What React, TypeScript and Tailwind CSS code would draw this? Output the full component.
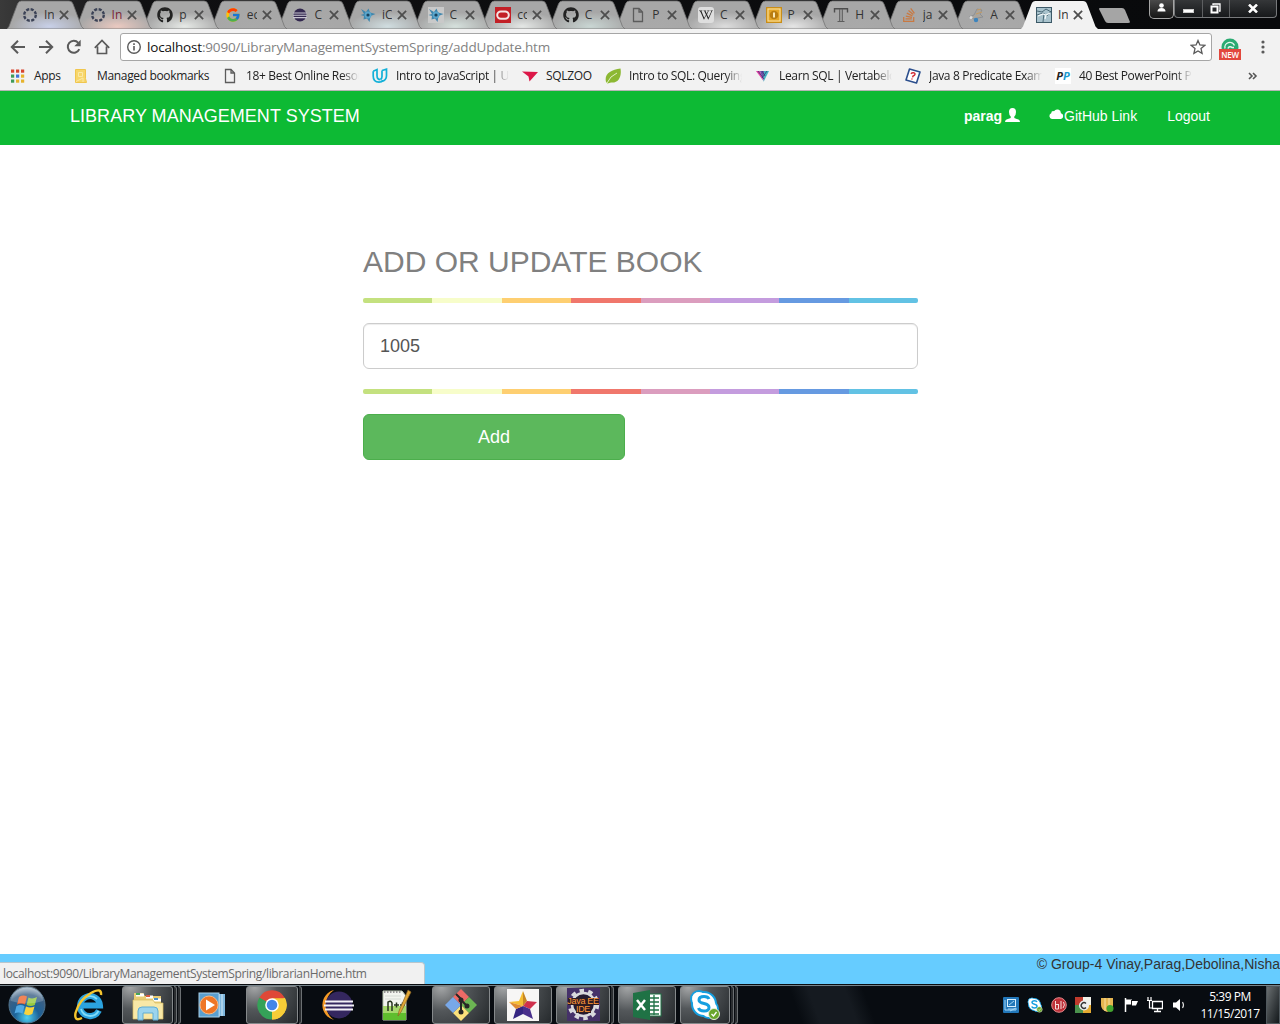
import React from "react";
import { FaGithub, FaWikipediaW, FaStackOverflow } from "react-icons/fa";
import { FcGoogle } from "react-icons/fc";

type IconProps = { size?: number; box?: string; children: React.ReactNode };

function Icon({ size = 16, box = "0 0 16 16", children }: IconProps) {
  return (
    <svg width={size} height={size} viewBox={box} className="block shrink-0" fill="none">
      {children}
    </svg>
  );
}

const DashedRing = () => (
  <Icon>
    <circle cx="8" cy="8" r="5.8" stroke="#3b4256" strokeWidth="2.4" strokeDasharray="3.1 1.45" />
  </Icon>
);

const EclipseIcon = () => (
  <Icon>
    <circle cx="8" cy="8" r="6.5" fill="#33284f" />
    <path d="M1 6h14M1 8.3h14M1 10.6h14" stroke="#c9c5d2" strokeWidth="1.1" />
  </Icon>
);

const Bird = ({ boxed = false }: { boxed?: boolean }) => (
  <Icon>
    {boxed && <rect width="16" height="16" fill="#c9c9c9" />}
    <path d="M1 2l5 3 2.500-3.500 1.500 4 5.500 1.500-5 2-1 6-2.500-3.500-3.500 1 .5-3.500L.5 8l3.500-1z" fill="#3e86ad" />
    <circle cx="8" cy="8" r="3.4" fill="#5aa5cb" />
    <circle cx="8" cy="8" r="1.6" fill="#17425f" />
  </Icon>
);

const OracleIcon = () => (
  <Icon>
    <rect width="16" height="16" fill="#c21f26" />
    <rect x="2.2" y="4.4" width="11.6" height="7.4" rx="3.7" stroke="#f4e4e4" strokeWidth="2" />
  </Icon>
);

const PageIcon = () => (
  <Icon>
    <path d="M3.5 1.5h5.5l3.5 3.5v9.500h-9zM9 1.500v3.500h3.500" stroke="#5c5c5c" strokeWidth="1.300" />
  </Icon>
);

const WikiIcon = () => (
  <span className="flex size-4 shrink-0 items-center justify-center rounded-[3px] bg-[#dedede]">
    <FaWikipediaW size={14} color="#222" />
  </span>
);

const GoldIcon = () => (
  <Icon>
    <rect x=".5" y=".5" width="15" height="15" fill="#e5a526" stroke="#c88d19" />
    <rect x="2" y="2" width="12" height="12" stroke="#f8e3a5" />
    <circle cx="8" cy="8" r="4.300" fill="#b97d12" />
    <path d="M8 5.500v5" stroke="#fbe9b8" strokeWidth="2" />
  </Icon>
);

const SerifT = () => (
  <Icon>
    <path d="M1.500 5.500V1.800h13v3.700" stroke="#4d4d4d" strokeWidth="1.400" />
    <path d="M6.700 2v12M9.300 2v12M4.500 14.500h7" stroke="#5d5d5d" strokeWidth="1.100" />
  </Icon>
);

const CloudSketch = () => (
  <Icon>
    <path d="M1 10l5-2 3-6 5 1-2 4 3 3-5 1-4 1z" fill="#a9a49d" stroke="#858a90" strokeWidth=".8" />
    <path d="M9 3l4-1M8 7l6-2" stroke="#c39a62" />
    <circle cx="8" cy="13" r="2.200" fill="#3d84bd" />
    <circle cx="3" cy="10.500" r="1.500" fill="#ddd" />
  </Icon>
);

const SpringTile = () => (
  <Icon>
    <rect x=".5" y=".5" width="15" height="15" fill="#a9c3cd" stroke="#3c5967" />
    <path d="M1 4l5 1 4-3 5 3M1 8l6-2 4 3 4-5M7 15l1-9" stroke="#40606e" strokeWidth=".9" />
    <path d="M2 9l5-2 3 1 4-2M9 12l1-4" stroke="#f4fafb" strokeWidth="1.200" />
  </Icon>
);

type TabItem = { icon: React.ReactNode; title: string; glow?: string; titleColor?: string };

const tabs: TabItem[] = [
  { icon: <DashedRing />, title: "In", glow: "#c8d0e8" },
  { icon: <DashedRing />, title: "In", glow: "#eac9c0", titleColor: "#7b2438" },
  { icon: <FaGithub size={16} color="#222" />, title: "p", glow: "#e6e9e6" },
  { icon: <FcGoogle size={16} />, title: "ec" },
  { icon: <EclipseIcon />, title: "C" },
  { icon: <Bird />, title: "iC", glow: "#d0dde0" },
  { icon: <Bird boxed />, title: "C", glow: "#d5e0dc" },
  { icon: <OracleIcon />, title: "co", glow: "#e4e7e5" },
  { icon: <FaGithub size={16} color="#222" />, title: "C", glow: "#c9d6d3" },
  { icon: <PageIcon />, title: "P" },
  { icon: <WikiIcon />, title: "C", glow: "#dcdcdc" },
  { icon: <GoldIcon />, title: "P", glow: "#e5e5e5" },
  { icon: <SerifT />, title: "H" },
  { icon: <FaStackOverflow size={16} color="#c87942" />, title: "ja" },
  { icon: <CloudSketch />, title: "A" },
  { icon: <SpringTile />, title: "In" },
];

function Tab({ tab, index }: { tab: TabItem; index: number }) {
  const active = index === tabs.length - 1;
  const id = `glow-${index}`;
  return (
    <div
      className="relative h-[29px] w-[67.6px] shrink-0"
      style={{ zIndex: active ? tabs.length + 1 : tabs.length - index }}
    >
      <svg width="81" height="29" viewBox="0 0 81 29" className="absolute top-0 left-0">
        <defs>
          <radialGradient id={id} cx=".55" cy=".9" r=".5">
            <stop offset="0" stopColor={tab.glow ?? "#a9a9a9"} />
            <stop offset="1" stopColor="#a7a7a7" />
          </radialGradient>
        </defs>
        <path
          d="M0 29L2 26.500 10.500 4Q11.500 1 14.500 1H62Q65 1 66 4L74.500 26.500 77 29Z"
          fill={active ? "#f2f2f2" : `url(#${id})`}
          stroke={active ? "none" : "#747474"}
          strokeWidth=".8"
        />
      </svg>
      <div className="relative flex h-[29px] items-center pt-px pl-[15px]">
        <span className="flex w-4 justify-center">{tab.icon}</span>
        <span
          className="ml-[6px] w-[10px] overflow-hidden text-[12px] leading-4 whitespace-nowrap"
          style={{ color: tab.titleColor ?? "#333" }}
        >
          {tab.title}
        </span>
        <svg width="10" height="10" viewBox="0 0 9 9" className="ml-[5px] shrink-0">
          <path d="M.8 .8l7.400 7.400M8.200 .8L.8 8.200" stroke="#4e4e4e" strokeWidth="1.600" />
        </svg>
      </div>
    </div>
  );
}

function TabStrip() {
  return (
    <div className="isolate flex h-[29px] overflow-hidden bg-gradient-to-r from-[#3a3a3a] via-[#101012] via-10% to-[#08090b] pl-[7px]">
      {tabs.map((tab, i) => (
        <Tab key={i} tab={tab} index={i} />
      ))}
      <svg width="36" height="29" viewBox="0 0 36 29" className="ml-[9px] shrink-0">
        <path d="M2 8H24Q26 8 27 10L32 22Q32 23 30 23H10Q8 23 7 21L1 9Q1 8 2 8Z" fill="#a5a5a5" />
      </svg>
      <div className="ml-[15px] h-[19px] w-[25px] shrink-0 rounded-b-[5px] border border-t-0 border-[#a5a5a5] bg-gradient-to-b from-[#4a4a4a] to-[#161616]">
        <svg width="23" height="18" viewBox="0 0 23 18">
          <circle cx="11.500" cy="5.500" r="2.300" fill="#fff" />
          <path d="M7.500 11.500q0-3.500 4-3.500t4 3.500z" fill="#fff" />
        </svg>
      </div>
      <div className="flex h-[18px] w-[103px] shrink-0 rounded-b-[4px] border border-t-0 border-[#77797b] bg-gradient-to-b from-[#353739] to-[#17191b]">
        <div className="flex w-[28px] items-center justify-center border-r border-[#5d5f61] pt-[4px]">
          <span className="h-[4px] w-[11px] border border-[#ccc] bg-white" />
        </div>
        <div className="flex w-[27px] items-center justify-center border-r border-[#5d5f61]">
          <svg width="11" height="11" viewBox="0 0 11 11" fill="none" stroke="#fff">
            <path d="M3 2V1h7v7H9" strokeWidth="1.300" />
            <rect x="1.500" y="3.500" width="6" height="6" strokeWidth="2" />
          </svg>
        </div>
        <div className="flex flex-1 items-center justify-center">
          <svg width="10" height="9" viewBox="0 0 10 9">
            <path d="M1 .5l8 8M9 .5l-8 8" stroke="#fff" strokeWidth="2.500" />
          </svg>
        </div>
      </div>
    </div>
  );
}

function Toolbar() {
  return (
    <div className="flex h-[36px] items-center bg-[#f2f2f2] pl-[10px]">
      <div className="flex gap-3">
        <Icon>
          <path d="M15 8H2M8 1.800L1.800 8 8 14.200" stroke="#5a5a5a" strokeWidth="2" />
        </Icon>
        <Icon>
          <path d="M1 8h13M8 1.800L14.200 8 8 14.200" stroke="#5a5a5a" strokeWidth="2" />
        </Icon>
        <Icon>
          <path d="M13.300 10.200A6 6 0 1 1 12.300 3.800" stroke="#5a5a5a" strokeWidth="2" />
          <path d="M14.700 .8v6.400H8.300z" fill="#5a5a5a" />
        </Icon>
        <Icon>
          <path d="M.8 8.800L8 1.500l7.200 7.300M3.500 7.500v7h9v-7" stroke="#5a5a5a" strokeWidth="1.700" />
        </Icon>
      </div>
      <div className="ml-[10px] flex h-[28px] w-[1092px] items-center rounded-[3px] border border-[#a6a6a6] bg-white pr-[5px] pl-[5px]">
        <Icon>
          <circle cx="8" cy="8" r="6.300" stroke="#5a5a5a" strokeWidth="1.400" />
          <path d="M8 7v4.500M8 4.300v1.600" stroke="#5a5a5a" strokeWidth="1.600" />
        </Icon>
        <span className="ml-[5px] flex-1 text-[13.5px] leading-5 tracking-[-0.18px] whitespace-nowrap text-[#828282]">
          <span className="text-[#111]">localhost</span>:9090/LibraryManagementSystemSpring/addUpdate.htm
        </span>
        <Icon>
          <path d="M8 1.500l1.900 4.500 4.800.4-3.700 3.200 1.100 4.800L8 11.900l-4.100 2.500L5 9.600 1.300 6.400l4.800-.4z" stroke="#5a5a5a" strokeWidth="1.300" />
        </Icon>
      </div>
      <div className="ml-[6px] flex h-[24px] w-[24px] flex-col items-center pt-[3px]">
        <svg width="18" height="11" viewBox="0 0 18 11" className="shrink-0">
          <circle cx="9" cy="9" r="8.500" fill="#2bab72" />
          <path d="M4 10.500a5 5 0 0 1 9.500-3M7 10.500a2.300 2.300 0 0 1 4-1h2" stroke="#e5f7ee" strokeWidth="1.400" fill="none" />
        </svg>
        <span className="flex h-[11px] w-[22px] shrink-0 items-center justify-center bg-[#e2483d] text-[8px] leading-none font-semibold tracking-[-0.2px] text-white">
          NEW
        </span>
      </div>
      <svg width="4" height="16" viewBox="0 0 4 16" className="ml-[19px]" fill="#5a5a5a">
        <circle cx="2" cy="3" r="1.600" />
        <circle cx="2" cy="8" r="1.600" />
        <circle cx="2" cy="13" r="1.600" />
      </svg>
    </div>
  );
}

const appColors = ["#d8452f", "#d8452f", "#d8452f", "#3f9b58", "#3f74d8", "#e6b32c", "#3f9b58", "#e6b32c", "#e6b32c"];

type Bookmark = { width: string; label: string; icon: React.ReactNode; fade?: boolean };

const bookmarks: Bookmark[] = [
  {
    width: "w-[63px]",
    label: "Apps",
    icon: (
      <Icon>
        {appColors.map((c, i) => (
          <rect key={i} x={1 + (i % 3) * 5} y={1.5 + Math.floor(i / 3) * 5} width="3.200" height="3.200" fill={c} />
        ))}
      </Icon>
    ),
  },
  {
    width: "w-[149px]",
    label: "Managed bookmarks",
    icon: (
      <Icon>
        <path d="M2.500 1.500h10v9l1 4h-11z" fill="#f7d66b" stroke="#f0c64e" />
        <path d="M5.500 4.500h4v4h-4zM3 13.500l7-3.500v4" stroke="#fbe9a6" />
      </Icon>
    ),
  },
  { width: "w-[150px]", label: "18+ Best Online Resources", icon: <PageIcon />, fade: true },
  {
    width: "w-[150px]",
    label: "Intro to JavaScript | Udacity",
    icon: (
      <Icon>
        <path d="M1.200 3.200L5 1.500v6q0 4 3.500 4.200M1.200 3.200V8q0 6 5.800 6.200 2.800 0 4-1.700" stroke="#12b0d8" strokeWidth="1.700" />
        <path d="M10 2.500l4.500-1.300v6.500q0 4.800-5 5.500M10 2.500v6q0 2-1.500 3" stroke="#12b0d8" strokeWidth="1.700" />
      </Icon>
    ),
    fade: true,
  },
  {
    width: "w-[83px]",
    label: "SQLZOO",
    icon: (
      <Icon>
        <path d="M0 3.500l16 .5-8.500 9.500-1-5z" fill="#dc1748" />
      </Icon>
    ),
  },
  {
    width: "w-[150px]",
    label: "Intro to SQL: Querying and",
    icon: (
      <Icon>
        <path d="M15.500 .5C17 9 13 15.500 6 14.500L2.500 15.500 1 14C-1 6 6 1.500 15.500 .5z" fill="#8cb833" />
        <path d="M2 15Q5 8 12 5" stroke="#e4f0c4" />
      </Icon>
    ),
    fade: true,
  },
  {
    width: "w-[150px]",
    label: "Learn SQL | Vertabelo",
    icon: (
      <Icon>
        <path d="M1 3h4l3.500 10z" fill="#df3fa3" />
        <path d="M5 3h4l-.5 10z" fill="#6b4fa8" />
        <path d="M9 3h5L8.500 14z" fill="#45b6c3" />
        <path d="M3 3l6 8M7 3l3 5M12 3L7 10" stroke="#343b77" strokeWidth=".8" />
      </Icon>
    ),
    fade: true,
  },
  {
    width: "w-[150px]",
    label: "Java 8 Predicate Example",
    icon: (
      <Icon>
        <path d="M4.500 1l10.500 3-3.500 11L1 12z" fill="#fff" stroke="#2c4f8d" strokeWidth="1.600" strokeLinejoin="round" />
        <path d="M6 5.800q1-1.500 3-1 1.800 1 .4 2.500-1.700.7-1.900 2M7 10.500l-.1 1" stroke="#d3323c" strokeWidth="1.500" />
      </Icon>
    ),
    fade: true,
  },
  {
    width: "w-[137px]",
    label: "40 Best PowerPoint Presentations",
    icon: (
      <span className="flex size-4 shrink-0 items-center justify-center bg-white text-[11px] leading-none font-bold text-[#222] italic">
        <span>P</span>
        <span className="text-[#1a9ad0]">P</span>
      </span>
    ),
    fade: true,
  },
];

function BookmarksBar() {
  return (
    <div className="flex h-[26px] items-center border-b border-[#b5b5b5] bg-[#f2f2f2] pb-[4px] pl-[10px]">
      {bookmarks.map((b) => (
        <div key={b.label} className={`flex shrink-0 items-center gap-2 ${b.width}`}>
          {b.icon}
          <span
            className={`text-[12px] leading-[18px] tracking-[-0.34px] whitespace-nowrap text-[#222] ${
              b.fade ? "w-[113px] overflow-hidden [mask-image:linear-gradient(to_right,black_85%,transparent)]" : ""
            }`}
          >
            {b.label}
          </span>
        </div>
      ))}
      <svg width="10" height="8" viewBox="0 0 10 8" fill="none" className="ml-[56px]">
        <path d="M1 1l3 3-3 3M5 1l3 3-3 3" stroke="#555" strokeWidth="1.600" />
      </svg>
    </div>
  );
}

function SiteNav() {
  return (
    <nav className="flex h-[54px] items-start justify-between bg-[#0dba34] px-[70px] text-white">
      <span className="pt-[15px] text-[18px] leading-5 tracking-[0.03px]">LIBRARY MANAGEMENT SYSTEM</span>
      <div className="flex gap-[30px] pt-[15px] text-[14px] leading-5">
        <span className="flex gap-[3px] font-bold">
          parag
          <svg width="15" height="15" viewBox="0 0 15 15" className="mt-[2px]">
            <path d="M7.500 0Q11 0 11 4 11 7 9.300 8.500V10l4.200 1.600Q15 12.200 15 14H0Q0 12.200 1.500 11.600L5.700 10V8.500Q4 7 4 4 4 0 7.500 0z" fill="#fff" />
          </svg>
        </span>
        <span className="-ml-px flex">
          <svg width="15" height="11" viewBox="0 0 15 11" className="mt-[3px]">
            <path d="M3 10a3 3 0 0 1-.8-5.700A2.300 2.300 0 0 1 5 2.200 3.800 3.800 0 0 1 12 4.200 3 3 0 0 1 12 10z" fill="#fff" />
          </svg>
          GitHub Link
        </span>
        <span>Logout</span>
      </div>
    </nav>
  );
}

function ColorRule() {
  return (
    <div className="flex h-[5px] overflow-hidden rounded-[2px]">
      <span className="flex-1 bg-[#c4e17f]" />
      <span className="flex-1 bg-[#f7fdca]" />
      <span className="flex-1 bg-[#fecf71]" />
      <span className="flex-1 bg-[#f0776c]" />
      <span className="flex-1 bg-[#db9dbe]" />
      <span className="flex-1 bg-[#c49cde]" />
      <span className="flex-1 bg-[#669ae1]" />
      <span className="flex-1 bg-[#62c2e4]" />
    </div>
  );
}

function BookForm() {
  return (
    <main className="min-h-0 flex-1 bg-white pt-[100px] pl-[363px]">
      <div className="w-[555px]">
        <h2 className="text-[30px] leading-[33px] text-[#808080]">ADD OR UPDATE BOOK</h2>
        <div className="pt-[20px]">
          <ColorRule />
        </div>
        <input
          defaultValue="1005"
          className="my-[20px] block h-[46px] w-full rounded-[6px] border border-[#ccc] px-4 text-[18px] text-[#555] shadow-[inset_0_1px_1px_rgba(0,0,0,0.075)] outline-none"
        />
        <ColorRule />
        <button className="mt-[20px] block h-[46px] w-[262px] rounded-[6px] border border-[#4cae4c] bg-[#5cb85c] text-[18px] text-white">
          Add
        </button>
      </div>
    </main>
  );
}

function SiteFooter() {
  return (
    <footer className="flex h-[30px] items-start justify-between bg-[#66ccff]">
      <div className="mt-[8px] h-[22px] w-[425px] rounded-tr-[4px] border-t border-r border-[#b9c6cd] bg-[#f1f1f1] pt-[2px] pl-[3px] font-['Open_Sans',sans-serif] text-[12px] leading-[18px] tracking-[-0.36px] whitespace-nowrap text-[#6a6a6a]">
        localhost:9090/LibraryManagementSystemSpring/librarianHome.htm
      </div>
      <span className="text-[14px] leading-5 whitespace-nowrap text-[#333]">© Group-4 Vinay,Parag,Debolina,Nisha</span>
    </footer>
  );
}

function TaskButton({ width, stack = 0, children }: { width: string; stack?: number; children: React.ReactNode }) {
  return (
    <div className="flex h-[38px] shrink-0">
      <div
        className={`flex items-center justify-center rounded-[3px] border border-[#85898b] bg-[radial-gradient(circle_at_15%_0%,#a5a7a8,#53575a_40%,#25292c)] ${width}`}
      >
        {children}
      </div>
      {Array.from({ length: stack }, (_, i) => (
        <div key={i} className="ml-px w-[3px] rounded-r-[3px] border-y border-r border-[#6b6f72] bg-[#2a2d30]" />
      ))}
    </div>
  );
}

const StartOrb = () => (
  <svg width="38" height="38" viewBox="0 0 38 38" className="shrink-0">
    <defs>
      <radialGradient id="orb" cx=".5" cy=".85" r=".85">
        <stop offset="0" stopColor="#4fd0f0" />
        <stop offset=".4" stopColor="#1c6299" />
        <stop offset=".75" stopColor="#3b5f83" />
        <stop offset="1" stopColor="#b5c5d2" />
      </radialGradient>
    </defs>
    <circle cx="19" cy="19" r="18" fill="url(#orb)" stroke="#51758e" />
    <path d="M11 11q4-2.500 8-.5l-2 8q-4-2-8 0z" fill="#ee672d" />
    <path d="M20.500 11.500q4 2 8.500-.5l-2.200 8q-4 2-8.300 0z" fill="#97c93e" />
    <path d="M8.500 20q4-2 8 0l-2 7.500q-4-2-8 0z" fill="#50a9e4" />
    <path d="M18 20.500q4 2 8.500 0l-2.200 7.500q-4 2.300-8.300 0z" fill="#fbd33c" />
    <path d="M3 15A16 16 0 0 1 35 15Q19 20 3 15z" fill="#fff" opacity=".2" />
  </svg>
);

const ExplorerE = () => (
  <Icon size={34} box="0 0 34 34">
    <path d="M26 22.500A10 10 0 1 1 27 17.500H10" stroke="#2ba3df" strokeWidth="6" />
    <path d="M25.500 23A9.500 9.500 0 0 1 8 21M8 14A10 10 0 0 1 24 11" stroke="#82dcf8" strokeWidth="1.800" />
    <path d="M9 30Q1 34 2.500 25 6 12 18 5 29-1 28 7" stroke="#f5c52e" strokeWidth="2.400" />
  </Icon>
);

const FolderIcon = () => (
  <Icon size={34} box="0 0 34 34">
    <path d="M3 5h9l2 3h16v22H3z" fill="#e9cc72" />
    <path d="M5 7h8M15 9h7M22 12h8" stroke="#fff" strokeWidth="3" />
    <path d="M5 6h4" stroke="#44a55a" strokeWidth="2" />
    <path d="M15 8h4" stroke="#d75a43" strokeWidth="2" />
    <path d="M23 11h4" stroke="#4a90c9" strokeWidth="2" />
    <path d="M2 12h20l2 3h8v16H2z" fill="#f8e8a7" stroke="#d9bc62" strokeWidth=".7" />
    <path d="M7 32V23q0-4 4-4h12q4 0 4 4v9h-5v-7H12v7z" fill="#9bd4ee" stroke="#5facd3" />
  </Icon>
);

const MediaPlayer = () => (
  <Icon size={28} box="0 0 28 28">
    <path d="M6 3h21v22H6z" fill="#7eb6dc" />
    <path d="M24 3v22M21 3v23" stroke="#d5ebf7" />
    <rect x="1" y="2" width="20" height="24" fill="#5a9fcf" stroke="#a7d0e9" />
    <circle cx="11" cy="14" r="9" fill="#ef7625" stroke="#fab780" />
    <path d="M8 8.500v11l9-5.500z" fill="#fff" />
  </Icon>
);

const ChromeIcon = () => (
  <Icon size={30} box="0 0 30 30">
    <path d="M15 15L2.300 7.700A14.600 14.600 0 0 1 27.700 7.700z" fill="#df4837" />
    <path d="M15 15L27.700 7.700A14.600 14.600 0 0 1 15 29.600z" fill="#f7cd37" />
    <path d="M15 15v14.600A14.600 14.600 0 0 1 2.300 7.700z" fill="#35a258" />
    <path d="M15 8.300h13A14.600 14.600 0 0 1 15 29.600l5.800-11.200z" fill="#f7cd37" />
    <path d="M2.300 7.700L9.200 18.400 15 22v-7z" fill="#35a258" />
    <circle cx="15" cy="15" r="6.800" fill="#fff" />
    <circle cx="15" cy="15" r="5.300" fill="#4386e8" />
  </Icon>
);

const EclipseLarge = () => (
  <Icon size={34} box="0 0 34 34">
    <path d="M14 2A15.500 15.500 0 0 0 14 32 18 18 0 0 1 14 2z" fill="#f49a26" />
    <circle cx="19" cy="17" r="13.500" fill="#34275f" />
    <path d="M5 13.500h28M4 17.500h30M5 21.500h28" stroke="#f3f1f7" strokeWidth="1.900" />
  </Icon>
);

const NotepadIcon = () => (
  <Icon size={34} box="0 0 34 34">
    <path d="M3 3h19l4 5v24H3z" fill="#f2f5ef" stroke="#b8c6b0" />
    <path d="M3 18h23v14H3z" fill="#a6d96c" />
    <path d="M3 25h23v7H3z" fill="#5fbe2e" />
    <path d="M4 4h17" stroke="#999" strokeWidth="2" strokeDasharray="1.500 1.500" />
    <path d="M5 8h16M5 11h16" stroke="#d5dcd5" />
    <path d="M8 23v-9q3-2 4 1v8M14 17h5M16.500 14.500v5M20 17h5M22.500 14.500v5" stroke="#27351f" strokeWidth="1.500" />
    <path d="M31 4l-10 20-3 4 1-5L28 2z" fill="#e1a736" stroke="#8a6425" strokeWidth=".7" />
  </Icon>
);

const GitIcon = () => (
  <Icon size={34} box="0 0 34 34">
    <path d="M17 1l8 8-8 8-8-8z" fill="#ed6a66" />
    <path d="M25 9l8 8-8 8-8-8z" fill="#6cb553" />
    <path d="M17 17l8 8-8 8-8-8z" fill="#fbe17b" />
    <path d="M9 9l8 8-8 8-8-8z" fill="#78a8e8" />
    <path d="M12 6l5 5v13M17 12l6 6" stroke="#272727" strokeWidth="2" />
    <circle cx="17" cy="12" r="2.500" fill="#272727" />
    <circle cx="17" cy="24" r="2.500" fill="#272727" />
    <circle cx="23" cy="18" r="2.500" fill="#272727" />
  </Icon>
);

const StarIcon = () => (
  <Icon size={32} box="0 0 32 32">
    <rect width="32" height="32" fill="#f7f6f5" />
    <path d="M16 17V2l4 10z" fill="#c78725" />
    <path d="M16 17V2l-4 10L2 13z" fill="#f5be34" />
    <path d="M16 17l4-5 10 1-7 7z" fill="#cf314c" />
    <path d="M16 17l7 3 3 10-10-5z" fill="#49308c" />
    <path d="M16 17v8L6 30l3-10z" fill="#352681" />
    <path d="M16 17L2 13l7 7z" fill="#de8b33" />
  </Icon>
);

const JavaEE = () => (
  <span className="relative flex size-[33px] items-center justify-center bg-[#453169]">
    <svg width="33" height="33" viewBox="0 0 33 33" className="absolute inset-0" fill="none">
      <circle cx="16.500" cy="16.500" r="14" stroke="#d9d9dd" strokeWidth="3.500" strokeDasharray="4.500 4.300" />
      <circle cx="16.500" cy="16.500" r="11.500" stroke="#d9d9dd" strokeWidth="2.500" fill="#241b33" />
      <path d="M1 10h31v7H1zM9 17h15v8H9z" fill="#2d1c22" />
    </svg>
    <span className="relative flex flex-col items-center font-['Liberation_Sans',sans-serif] text-[9px] leading-[8px] tracking-[-0.3px] whitespace-nowrap text-[#ff9838]">
      <span>Java EE</span>
      <span>IDE</span>
    </span>
  </span>
);

const ExcelIcon = () => (
  <Icon size={32} box="0 0 32 32">
    <rect x="15" y="5" width="15" height="22" fill="#fff" stroke="#1f7245" />
    <path d="M18 9h10M18 13h10M18 17h10M18 21h10M18 25h10M23 6v20" stroke="#1f7245" strokeWidth="1.300" />
    <path d="M2 4l17-3v30L2 28z" fill="#1f7245" />
    <path d="M6 11l8 10M14 11L6 21" stroke="#fff" strokeWidth="2.500" />
  </Icon>
);

const SkypeShape = () => (
  <>
    <circle cx="10" cy="10" r="8" fill="#fff" stroke="#159fe0" strokeWidth="2" />
    <circle cx="20" cy="20" r="9" fill="#fff" stroke="#159fe0" strokeWidth="2" />
    <circle cx="15" cy="15" r="12" fill="#fff" stroke="#159fe0" strokeWidth="2" />
    <circle cx="10" cy="10" r="7" fill="#fff" />
    <circle cx="20" cy="20" r="8" fill="#fff" />
    <path d="M20 10q-1-2.500-5-2.500-5 0-5 3.500 0 2.500 5 3.500 5 1 5 4 0 3.500-5 3.500-4.500 0-5.500-3" stroke="#159fe0" strokeWidth="3" />
    <circle cx="25" cy="25" r="5.500" fill="#69a52c" stroke="#e7f0da" />
    <path d="M22.500 25l2 2 3-4" stroke="#fff" strokeWidth="1.300" />
  </>
);

function SystemTray() {
  return (
    <div className="ml-auto flex items-center">
      <div className="flex gap-2">
        <Icon>
          <rect width="16" height="16" rx="1" fill="#2277b9" />
          <rect x="4.500" y="2.500" width="8" height="7" stroke="#d8f0ff" />
          <path d="M2 3v10h11M5 12h9M6 8l5-4M7 14l6-3" stroke="#a0d5f6" />
        </Icon>
        <Icon box="0 0 32 32">
          <SkypeShape />
        </Icon>
        <Icon>
          <circle cx="8" cy="8" r="7.300" fill="#bd3038" stroke="#e8888c" />
          <path d="M4.500 4v8M7.500 7v5h-3M4.500 7.500h3M10 4v8M12.500 5q2 3-.5 6" stroke="#f5dada" strokeWidth="1" />
        </Icon>
        <Icon>
          <path d="M0 0h9v8H0z" fill="#bf3b2d" />
          <path d="M8 0h8v9H8z" fill="#f1f1e9" />
          <path d="M0 8h8v8H0z" fill="#4a924d" />
          <path d="M8 8h8v8H8z" fill="#e5aa31" />
          <circle cx="9" cy="8.500" r="5" fill="#ededed" />
          <path d="M11 6.500a2.800 2.800 0 1 0 0 4" stroke="#333" strokeWidth="1.300" />
        </Icon>
        <Icon>
          <path d="M2 1h12v7q0 5-6 7-6-2-6-7z" fill="#e6b650" />
          <path d="M6 1v13M10 1v13" stroke="#f9dfa0" />
          <circle cx="11" cy="11.500" r="3.500" fill="#44a52f" />
        </Icon>
        <Icon>
          <path d="M2.500 1v14" stroke="#fff" strokeWidth="1.500" />
          <path d="M3 2.500h6v1.500h6L13 8.500H9V7.500H3z" fill="#fff" />
          <path d="M8.500 3v5" stroke="#222" />
        </Icon>
        <Icon>
          <path d="M5.500 4.500h10v7h-10zM10.500 12v2.500M7 14.500h7" stroke="#fff" strokeWidth="1.300" />
          <path d="M1 0v3M4 0v3M0 3.500h5M2.500 4v7h3" stroke="#fff" strokeWidth="1.200" />
        </Icon>
        <Icon>
          <path d="M2 5.500h3L9 2v12l-4-3.500H2z" fill="#fff" />
          <path d="M11.500 5q2 3 0 6" stroke="#ddd" strokeWidth="1.200" />
        </Icon>
      </div>
      <div className="ml-[9px] w-[68px] text-center text-[12px] leading-[17px] tracking-[-0.45px] whitespace-nowrap text-white">
        5:39 PM
        <br />
        11/15/2017
      </div>
      <div className="ml-[2px] h-[38px] w-[14px] border border-[#50585d] bg-gradient-to-br from-[#6b7072] to-[#14191c]" />
    </div>
  );
}

function Taskbar() {
  return (
    <div className="flex h-[40px] items-center border-t border-[#0a0d10] bg-[#080c11] pl-[8px] shadow-[inset_0_1px_0_#77848b]">
      <div className="flex w-[58px]">
        <StartOrb />
      </div>
      <div className="flex w-[56px] pl-[7px]">
        <ExplorerE />
      </div>
      <div className="w-[76px]">
        <TaskButton width="w-[51px]" stack={2}>
          <FolderIcon />
        </TaskButton>
      </div>
      <div className="w-[48px]">
        <MediaPlayer />
      </div>
      <div className="w-[74px]">
        <TaskButton width="w-[52px]" stack={1}>
          <ChromeIcon />
        </TaskButton>
      </div>
      <div className="w-[60px]">
        <EclipseLarge />
      </div>
      <div className="w-[52px]">
        <NotepadIcon />
      </div>
      <div className="flex gap-[4px]">
        <TaskButton width="w-[58px]">
          <GitIcon />
        </TaskButton>
        <TaskButton width="w-[58px]">
          <StarIcon />
        </TaskButton>
        <TaskButton width="w-[54px]" stack={1}>
          <JavaEE />
        </TaskButton>
        <TaskButton width="w-[58px]">
          <ExcelIcon />
        </TaskButton>
        <TaskButton width="w-[50px]" stack={2}>
          <Icon size={32} box="0 0 32 32">
            <SkypeShape />
          </Icon>
        </TaskButton>
      </div>
      <div className="h-[38px] w-[170px] bg-[linear-gradient(70deg,transparent_35%,#151a20_45%,#151a20_65%,transparent_75%)]" />
      <SystemTray />
    </div>
  );
}

export default function App() {
  return (
    <div className="flex h-[1024px] w-[1280px] flex-col overflow-hidden bg-white font-['Liberation_Sans',Arial,sans-serif]">
      <header className="font-['Open_Sans',sans-serif]">
        <TabStrip />
        <Toolbar />
        <BookmarksBar />
      </header>
      <SiteNav />
      <BookForm />
      <SiteFooter />
      <div className="font-['Open_Sans',sans-serif]">
        <Taskbar />
      </div>
    </div>
  );
}
